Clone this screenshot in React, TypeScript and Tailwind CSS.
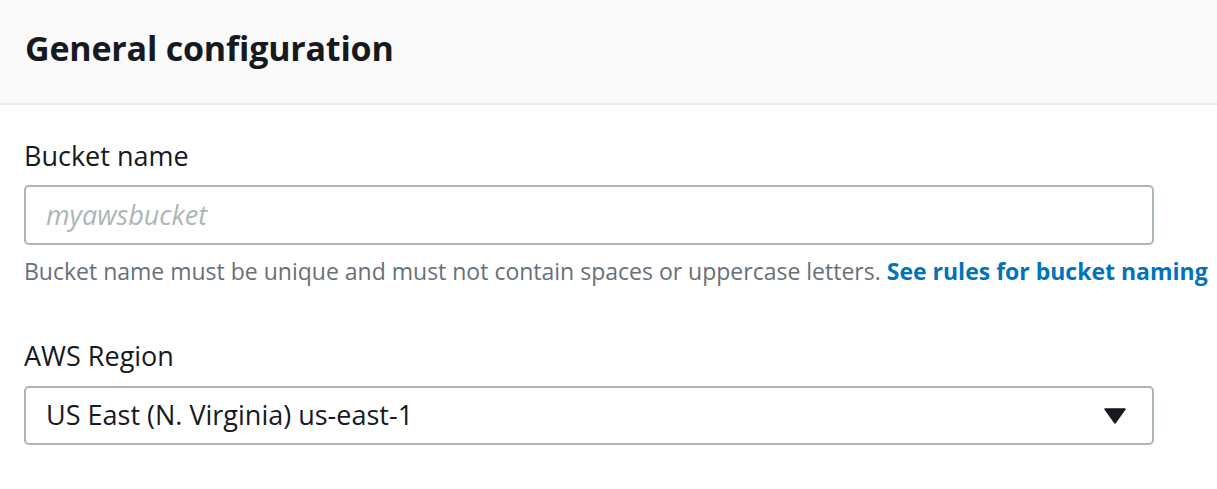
export default function App() {
  return (
    <div className="w-[1217px] h-[489px] bg-white overflow-hidden" style={{ fontFamily: '"Open Sans", "Noto Sans", sans-serif' }}>
      <div className="h-[105px] bg-[#fafafa] border-b-2 border-[#eaeded] px-[25px] pt-[25px]">
        <h2 className="text-[34px] leading-[46px] font-bold text-[#16191f] tracking-[-0.2px]">General configuration</h2>
      </div>
      <div className="px-[24px] pt-[32px]">
        <label className="block text-[27px] text-[#16191f] leading-[38px]">Bucket name</label>
        <div className="mt-[10px] w-[1130px] h-[60px] border-2 border-[#aab7b8] rounded-[5px] flex items-center px-[20px]">
          <span className="text-[27px] italic text-[#aab7b8]">myawsbucket</span>
        </div>
        <p className="mt-[10px] text-[23px] text-[#687078] whitespace-nowrap leading-[32px]">
          Bucket name must be unique and must not contain spaces or uppercase letters.{' '}
          <a className="font-bold text-[#0073bb]">See rules for bucket naming</a>
        </p>
        <label className="block mt-[50px] text-[27px] text-[#16191f] leading-[38px]">AWS Region</label>
        <div className="mt-[11px] w-[1130px] h-[59px] border-2 border-[#aab7b8] rounded-[5px] flex items-center justify-between pl-[20px] pr-[26px]">
          <span className="text-[27px] text-[#16191f]">US East (N. Virginia) us-east-1</span>
          <svg width="22" height="16" viewBox="0 0 22 16">
            <polygon points="1,1 21,1 11,15" fill="#16191f" stroke="#16191f" strokeWidth="1.5" strokeLinejoin="round" />
          </svg>
        </div>
      </div>
    </div>
  );
}
